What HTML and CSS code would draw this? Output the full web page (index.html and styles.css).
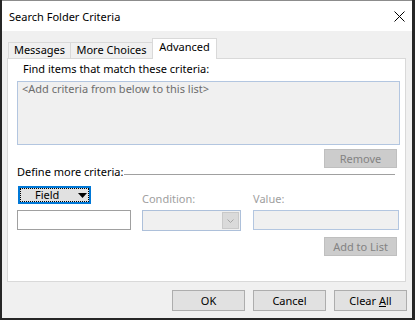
FILE: index.html
```html
<!DOCTYPE html>
<html>
<head>
<meta charset="utf-8">
<title>Search Folder Criteria</title>
<link rel="stylesheet" href="styles.css">
</head>
<body>
<div class="window">
  <div class="titlebar">
    <span class="title">Search Folder Criteria</span>
    <svg class="close" width="11" height="11" viewBox="0 0 11 11"><path d="M0.5 0.5L10.5 10.5M10.5 0.5L0.5 10.5" stroke="#000" stroke-width="1" fill="none"/></svg>
  </div>
  <div class="client">
    <div class="tabs">
      <div class="tab tab-first">Messages</div>
      <div class="tab tab-mid">More Choices</div>
      <div class="tab tab-active">Advanced</div>
    </div>
    <div class="panel">
      <div class="find">Find items that match these criteria:</div>
      <div class="listbox">&lt;Add criteria from below to this list&gt;</div>
      <div class="btn-row"><div class="btn disabled">Remove</div></div>
      <div class="define"><span class="define-label">Define more criteria:</span><span class="rule"></span></div>
      <div class="criteria">
        <div class="field-btn">
          <div class="focus"><span>Field</span><svg class="tri" width="9" height="5" viewBox="0 0 9 5"><polygon points="0,0 9,0 4.5,5" fill="#000"/></svg></div>
        </div>
        <div class="dim">Condition:</div>
        <div class="dim">Value:</div>
        <div class="textbox"></div>
        <div class="combo"><div class="combo-arrow"><svg width="7" height="4" viewBox="0 0 7 4"><polyline points="0.5,0.5 3.5,3.5 6.5,0.5" fill="none" stroke="#a6a6a6" stroke-width="1"/></svg></div></div>
        <div class="valuebox"></div>
      </div>
      <div class="btn-row add"><div class="btn disabled">Add to List</div></div>
    </div>
    <div class="footer">
      <div class="btn big">OK</div>
      <div class="btn big">Cancel</div>
      <div class="btn big">Clear <u>A</u>ll</div>
    </div>
  </div>
</div>
</body>
</html>
```
FILE: styles.css
```css
* { box-sizing: border-box; }
html, body { margin: 0; padding: 0; }
body {
  background: #262626;
  width: 415px;
  height: 320px;
  overflow: hidden;
  font-family: "Noto Sans", "Open Sans", sans-serif;
  font-size: 11px;
  color: #000;
}
.window {
  margin-left: 2px;
  width: 410px;
  height: 318px;
  border-top: 1px solid #8c8c8c;
  background: #f0f0f0;
}
.titlebar {
  height: 30px;
  background: #fff;
  display: flex;
  align-items: center;
  padding: 0 7px;
}
.title { line-height: 15px; }
.close { margin-left: auto; }
.client {
  height: 287px;
  padding-top: 7px;
}
.tabs {
  display: flex;
  align-items: flex-end;
  height: 20px;
  padding-left: 6px;
}
.tab {
  height: 16px;
  line-height: 14px;
  text-align: center;
  white-space: nowrap;
  border-top: 1px solid #d9d9d9;
  background: #f0f0f0;
}
.tab-first {
  width: 63px;
  border-left: 1px solid #d9d9d9;
  border-right: 1px solid #d9d9d9;
}
.tab-mid { width: 81px; }
.tab-active {
  width: 65px;
  height: 21px;
  margin-bottom: -1px;
  padding-top: 1px;
  border-left: 1px solid #d9d9d9;
  border-right: 1px solid #d9d9d9;
  background: #fff;
  position: relative;
  z-index: 1;
}
.panel {
  margin-left: 5px;
  width: 399px;
  height: 224px;
  border: 1px solid #d9d9d9;
  background: #fff;
}
.find {
  margin: 2px 0 0 15px;
  line-height: 15px;
}
.listbox {
  margin: 5px 0 0 9px;
  width: 383px;
  height: 64px;
  border: 1px solid #b3c6e0;
  background: #f0f0f0;
  color: #6d6d6d;
  padding-left: 4px;
  line-height: 13px;
}
.btn-row {
  display: flex;
  justify-content: flex-end;
  padding-right: 8px;
  margin-top: 4px;
}
.btn-row.add { margin-top: 6px; }
.btn {
  width: 73px;
  height: 19px;
  border: 1px solid #adadad;
  background: #e1e1e1;
  text-align: center;
  line-height: 17px;
  white-space: nowrap;
}
.btn.disabled {
  background: #cccccc;
  border-color: #bfbfbf;
  color: #838383;
}
.btn.big {
  height: 21px;
  line-height: 19px;
}
.define {
  display: flex;
  align-items: flex-start;
  height: 8px;
  line-height: 8px;
  padding: 0 10px 0 9px;
  white-space: nowrap;
}
.rule {
  flex: 1;
  margin: 6px 0 0 1px;
  border-top: 1px solid #a0a0a0;
}
.criteria {
  display: grid;
  grid-template-columns: 125px 111px 146px;
  grid-template-rows: 18px 21px;
  row-gap: 6px;
  margin-top: 10px;
  padding-left: 9px;
}
.field-btn {
  margin-left: 1px;
  width: 73px;
  height: 18px;
  border: 2px solid #0078d7;
  background: #e1e1e1;
}
.focus {
  height: 100%;
  border: 1px dotted #000;
  display: flex;
  align-items: center;
  padding: 0 1px 0 14px;
  line-height: 12px;
}
.tri { margin-left: auto; }
.dim {
  align-self: end;
  line-height: 11px;
  color: #a0a0a0;
}
.textbox {
  width: 114px;
  height: 20px;
  border: 1px solid #a0a0a0;
  background: #fff;
}
.combo {
  width: 99px;
  height: 21px;
  border: 1px solid #adc0da;
  background: #f0f0f0;
  padding: 1px;
  display: flex;
  justify-content: flex-end;
}
.combo-arrow {
  width: 17px;
  background: #dadada;
  border: 1px solid #c9c9c9;
  display: flex;
  align-items: center;
  justify-content: center;
}
.valuebox {
  width: 146px;
  height: 20px;
  border: 1px solid #b3c6e0;
  background: #f0f0f0;
}
.footer {
  margin-top: 8px;
  display: flex;
  justify-content: flex-end;
  gap: 8px;
  padding-right: 5px;
}
```
